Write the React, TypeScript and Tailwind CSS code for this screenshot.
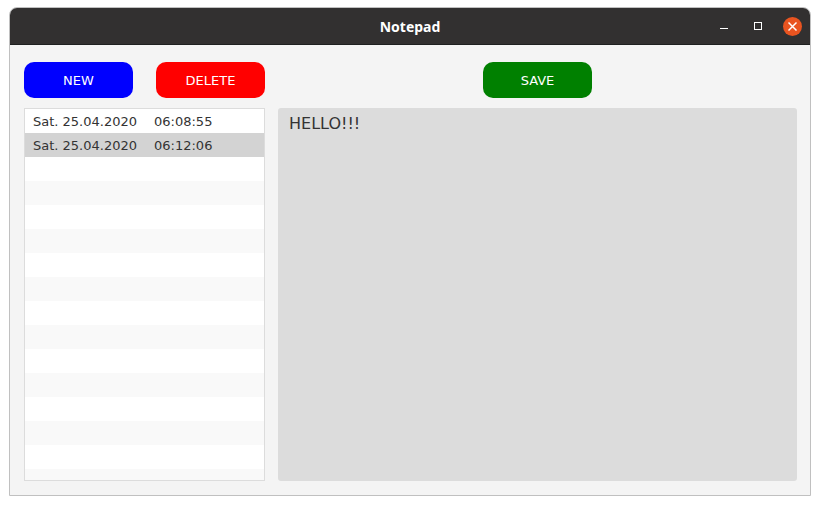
import { useState } from "react";

type Note = { id: number; date: string; time: string; text: string };

const initialNotes: Note[] = [
  { id: 1, date: "Sat. 25.04.2020", time: "06:08:55", text: "" },
  { id: 2, date: "Sat. 25.04.2020", time: "06:12:06", text: "HELLO!!!" },
];

const actionButton =
  "h-9 w-[109px] rounded-[10px] pt-0.5 text-center text-[13px] leading-5 text-white";

function TitleBar() {
  return (
    <header className="grid h-[37px] shrink-0 grid-cols-[1fr_auto_1fr] items-center border-b border-[#1f2020] bg-[#323030] pt-px">
      <h1 className="col-start-2 font-['Noto_Sans',sans-serif] text-sm font-bold text-white">
        Notepad
      </h1>
      <div className="flex items-center justify-end gap-4 pr-2 text-white">
        <button type="button" aria-label="Minimize" className="size-[18px]">
          <svg viewBox="0 0 18 18" className="size-[18px]" shapeRendering="crispEdges">
            <rect x="5" y="10" width="8" height="1" fill="currentColor" />
          </svg>
        </button>
        <button type="button" aria-label="Maximize" className="size-[18px]">
          <svg viewBox="0 0 18 18" className="size-[18px]" shapeRendering="crispEdges">
            <rect x="5.5" y="4.5" width="7" height="7" fill="none" stroke="currentColor" />
          </svg>
        </button>
        <button type="button" aria-label="Close" className="size-[19px] rounded-full bg-[#e95420]">
          <svg viewBox="0 0 19 19" className="size-[19px]">
            <path d="M5.5 5.5l8 8M13.5 5.5l-8 8" fill="none" stroke="currentColor" strokeWidth="1.5" />
          </svg>
        </button>
      </div>
    </header>
  );
}

export default function App() {
  const [notes, setNotes] = useState<Note[]>(initialNotes);
  const [selectedId, setSelectedId] = useState(2);
  const [draft, setDraft] = useState("HELLO!!!");

  const select = (note: Note) => {
    setSelectedId(note.id);
    setDraft(note.text);
  };

  const create = () => {
    const now = new Date();
    const day = now.toLocaleDateString("en-US", { weekday: "short" });
    const note: Note = {
      id: now.getTime(),
      date: `${day}. ${now.toLocaleDateString("de-DE", { day: "2-digit", month: "2-digit", year: "numeric" })}`,
      time: now.toLocaleTimeString("de-DE"),
      text: "",
    };
    setNotes([...notes, note]);
    select(note);
  };

  const remove = () => {
    setNotes(notes.filter((n) => n.id !== selectedId));
    setDraft("");
  };

  const save = () =>
    setNotes(notes.map((n) => (n.id === selectedId ? { ...n, text: draft } : n)));

  return (
    <div className="h-screen bg-white px-[9px] pt-[7px] pb-[9px] font-['DejaVu_Sans',sans-serif] text-[#333333]">
      <div className="flex h-full flex-col overflow-hidden rounded-t-lg border border-[#c0c0c0] bg-[#f4f4f4]">
        <TitleBar />
        <main className="flex min-h-0 flex-1 gap-[13px] pt-[17px] pr-[13px] pb-[14px] pl-[14px]">
          <section className="flex w-[241px] shrink-0 flex-col gap-[10px]">
            <div className="flex justify-between">
              <button type="button" onClick={create} className={`${actionButton} bg-[#0000ff]`}>
                NEW
              </button>
              <button type="button" onClick={remove} className={`${actionButton} bg-[#ff0000]`}>
                DELETE
              </button>
            </div>
            <ul className="min-h-0 flex-1 overflow-hidden border border-[#dcdcdc] bg-[repeating-linear-gradient(#ffffff_0px,#ffffff_24px,#f9f9f9_24px,#f9f9f9_48px)]">
              {notes.map((note) => (
                <li key={note.id}>
                  <button
                    type="button"
                    aria-pressed={note.id === selectedId}
                    onClick={() => select(note)}
                    className={`flex h-6 w-full items-center gap-[17px] px-2 pt-0.5 text-left text-[13px] leading-5 ${
                      note.id === selectedId ? "bg-[#d3d3d3]" : ""
                    }`}
                  >
                    <span>{note.date}</span>
                    <span>{note.time}</span>
                  </button>
                </li>
              ))}
            </ul>
          </section>
          <section className="flex min-w-0 flex-1 flex-col gap-[10px]">
            <div className="flex justify-center">
              <button type="button" onClick={save} className={`${actionButton} bg-[#008000]`}>
                SAVE
              </button>
            </div>
            <textarea
              aria-label="Note text"
              value={draft}
              onChange={(e) => setDraft(e.target.value)}
              className="min-h-0 w-full flex-1 resize-none rounded-[3px] bg-[#dcdcdc] px-[11px] py-[6px] text-base leading-5 outline-none"
            />
          </section>
        </main>
      </div>
    </div>
  );
}
